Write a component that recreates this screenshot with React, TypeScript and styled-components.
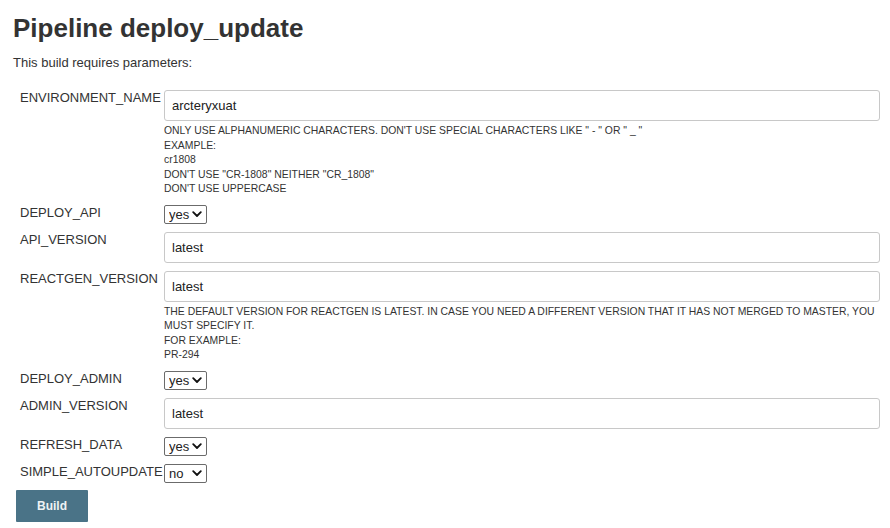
import React from "react";
import styled, { createGlobalStyle } from "styled-components";

const GlobalStyle = createGlobalStyle`
  html, body { margin: 0; padding: 0; background: #ffffff; }
  body { font-family: "Liberation Sans", Arial, sans-serif; color: #333333; }
`;

const Page = styled.div`
  padding: 0 10px 0 13px;
`;

const Title = styled.h1`
  margin: 0;
  padding-top: 12px;
  font-size: 26px;
  line-height: 32px;
  font-weight: 700;
  color: #333333;
`;

const Intro = styled.p`
  margin: 11px 0 0;
  font-size: 13px;
  line-height: 16px;
  color: #333333;
`;

const Params = styled.div`
  margin: 19px 0 -1px;
  display: flex;
  flex-direction: column;
`;

const Row = styled.div`
  display: grid;
  grid-template-columns: 144px 1fr;
  padding: 0 0 8px 7px;
`;

const Label = styled.div`
  font-size: 13px;
  line-height: 16px;
  color: #333333;
  white-space: nowrap;
`;

const Field = styled.div`
  display: flex;
  flex-direction: column;
  align-items: flex-start;
`;

const TextInput = styled.input`
  box-sizing: border-box;
  width: 100%;
  height: 31px;
  padding: 0 7px;
  border: 1px solid #c8c8c8;
  border-radius: 3px;
  font-family: "Liberation Sans", Arial, sans-serif;
  font-size: 13px;
  color: #222222;
  background: #ffffff;
  outline: none;
`;

const Description = styled.div`
  margin-top: 3px;
  font-size: 10.4px;
  line-height: 14.5px;
  color: #333333;
`;

const SelectWrap = styled.div`
  position: relative;
  width: 43px;
  height: 19px;
`;

const Select = styled.select`
  appearance: none;
  -webkit-appearance: none;
  box-sizing: border-box;
  width: 43px;
  height: 19px;
  margin: 0;
  padding: 0 0 0 4px;
  border: 1px solid #6b6b6b;
  border-radius: 2px;
  background: #ffffff;
  font-family: "Liberation Sans", Arial, sans-serif;
  font-size: 13px;
  line-height: 17px;
  color: #222222;
  outline: none;
`;

const Chevron = styled.svg`
  position: absolute;
  right: 5px;
  top: 6px;
  width: 10px;
  height: 7px;
  pointer-events: none;
`;

const BuildButton = styled.button`
  margin: 0 0 0 3px;
  width: 72px;
  height: 32px;
  border: none;
  border-radius: 1px;
  background: #4a7387;
  color: #eef2f4;
  font-family: "Liberation Sans", Arial, sans-serif;
  font-size: 12px;
  font-weight: 700;
  cursor: pointer;
`;

type Param =
  | { kind: "text"; name: string; value: string; desc?: string[] }
  | { kind: "choice"; name: string; value: string; options: string[] };

const params: Param[] = [
  {
    kind: "text",
    name: "ENVIRONMENT_NAME",
    value: "arcteryxuat",
    desc: [
      "ONLY USE ALPHANUMERIC CHARACTERS. DON'T USE SPECIAL CHARACTERS LIKE \" - \" OR \" _ \"",
      "EXAMPLE:",
      "cr1808",
      "DON'T USE \"CR-1808\" NEITHER \"CR_1808\"",
      "DON'T USE UPPERCASE",
    ],
  },
  { kind: "choice", name: "DEPLOY_API", value: "yes", options: ["yes", "no"] },
  { kind: "text", name: "API_VERSION", value: "latest" },
  {
    kind: "text",
    name: "REACTGEN_VERSION",
    value: "latest",
    desc: [
      "THE DEFAULT VERSION FOR REACTGEN IS LATEST. IN CASE YOU NEED A DIFFERENT VERSION THAT IT HAS NOT MERGED TO MASTER, YOU MUST SPECIFY IT.",
      "FOR EXAMPLE:",
      "PR-294",
    ],
  },
  { kind: "choice", name: "DEPLOY_ADMIN", value: "yes", options: ["yes", "no"] },
  { kind: "text", name: "ADMIN_VERSION", value: "latest" },
  { kind: "choice", name: "REFRESH_DATA", value: "yes", options: ["yes", "no"] },
  { kind: "choice", name: "SIMPLE_AUTOUPDATE", value: "no", options: ["no", "yes"] },
];

function ChoiceField({ value, options }: { value: string; options: string[] }) {
  return (
    <SelectWrap>
      <Select defaultValue={value}>
        {options.map((o) => (
          <option key={o} value={o}>
            {o}
          </option>
        ))}
      </Select>
      <Chevron viewBox="0 0 10 7">
        <path d="M1.2 1.2 L5 5 L8.8 1.2" fill="none" stroke="#111" strokeWidth="1.8" strokeLinecap="round" strokeLinejoin="round" />
      </Chevron>
    </SelectWrap>
  );
}

export default function App() {
  return (
    <>
      <GlobalStyle />
      <Page>
        <Title>Pipeline deploy_update</Title>
        <Intro>This build requires parameters:</Intro>
        <Params>
          {params.map((p) => (
            <Row key={p.name}>
              <Label>{p.name}</Label>
              <Field>
                {p.kind === "text" ? (
                  <>
                    <TextInput defaultValue={p.value} />
                    {p.desc && (
                      <Description>
                        {p.desc.map((line, i) => (
                          <div key={i}>{line}</div>
                        ))}
                      </Description>
                    )}
                  </>
                ) : (
                  <ChoiceField value={p.value} options={p.options} />
                )}
              </Field>
            </Row>
          ))}
        </Params>
        <BuildButton>Build</BuildButton>
      </Page>
    </>
  );
}
